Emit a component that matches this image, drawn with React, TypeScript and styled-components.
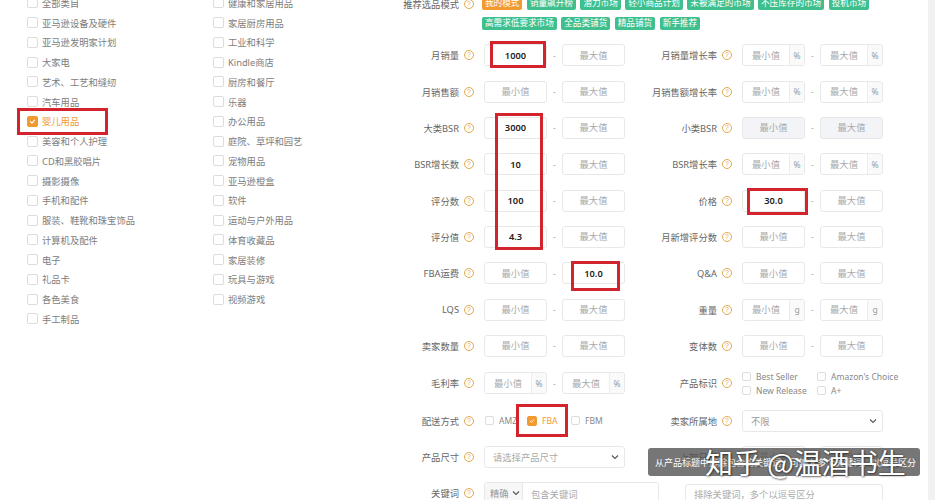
import React from "react";
import styled, { createGlobalStyle } from "styled-components";

const ORANGE = "#f29a30";
const GREEN = "#3fbf8d";
const RED = "#d3232c";

const GlobalStyle = createGlobalStyle`
  html, body {
    margin: 0;
    padding: 0;
    background: #fff;
    overflow: hidden;
  }
  body {
    font-family: "Noto Sans", "Noto Sans CJK SC", sans-serif;
  }
  * { box-sizing: border-box; }
`;

const leftCats = [
  "全部类目", "亚马逊设备及硬件", "亚马逊发明家计划", "大家电", "艺术、工艺和缝纫",
  "汽车用品", "婴儿用品", "美容和个人护理", "CD和黑胶唱片", "摄影摄像", "手机和配件",
  "服装、鞋靴和珠宝饰品", "计算机及配件", "电子", "礼品卡", "各色美食", "手工制品"
];
const midCats = [
  "健康和家居用品", "家居厨房用品", "工业和科学", "Kindle商店", "厨房和餐厅", "乐器",
  "办公用品", "庭院、草坪和园艺", "宠物用品", "亚马逊橙盒", "软件", "运动与户外用品",
  "体育收藏品", "家居装修", "玩具与游戏", "视频游戏"
];
const tags = [
  "我的模式", "销量飙升榜", "潜力市场", "轻小商品计划", "未被满足的市场", "不压库存的市场",
  "投机市场", "高需求低要求市场", "全品类铺货", "精品铺货", "新手推荐"
];

const Check: React.FC<{ checked?: boolean; size?: number }> = ({ checked, size = 10 }) => (
  <CheckBox $checked={checked} $size={size}>
    {checked && (
      <svg width={size - 4} height={size - 4} viewBox="0 0 10 10">
        <path d="M2 5.2 L4.2 7.2 L8 3" fill="none" stroke="#fff" strokeWidth="1.6" strokeLinecap="round" strokeLinejoin="round" />
      </svg>
    )}
  </CheckBox>
);

const Chevron = () => (
  <svg width="8" height="6" viewBox="0 0 8 6">
    <path d="M1 1.5 L4 4.5 L7 1.5" fill="none" stroke="#555" strokeWidth="1.1" />
  </svg>
);

const Label: React.FC<{ children: React.ReactNode; top?: boolean }> = ({ children, top }) => (
  <LabelCell $top={top}>
    {children}
    <Help>?</Help>
  </LabelCell>
);

const Box: React.FC<{ value?: string; ph: string; suffix?: string; disabled?: boolean }> = ({
  value,
  ph,
  suffix,
  disabled
}) => (
  <InputShell $disabled={disabled}>
    <Field placeholder={ph} value={value ?? ""} readOnly />
    {suffix && <Suffix>{suffix}</Suffix>}
  </InputShell>
);

const Range: React.FC<{ min?: string; max?: string; suffix?: string; disabled?: boolean }> = ({
  min,
  max,
  suffix,
  disabled
}) => (
  <RangeRow>
    <Box value={min} ph="最小值" suffix={suffix} disabled={disabled} />
    <Dash>-</Dash>
    <Box value={max} ph="最大值" suffix={suffix} disabled={disabled} />
  </RangeRow>
);

const App: React.FC = () => {
  return (
    <Page>
      <GlobalStyle />
      <CategoryPanel>
        <CategoryColumn>
          {leftCats.map((c) => (
            <CategoryRow key={c} $checked={c === "婴儿用品"}>
              <Check size={11} checked={c === "婴儿用品"} />
              {c}
            </CategoryRow>
          ))}
        </CategoryColumn>
        <CategoryColumn>
          {midCats.map((c) => (
            <CategoryRow key={c}>
              <Check size={11} />
              {c}
            </CategoryRow>
          ))}
        </CategoryColumn>
      </CategoryPanel>

      <FormGrid>
        <Label top>推荐选品模式</Label>
        <TagList>
          {tags.map((t, i) => (
            <Tag key={t} $active={i === 0}>{t}</Tag>
          ))}
        </TagList>

        <Label>月销量</Label>
        <Range min="1000" />
        <Label>月销量增长率</Label>
        <Range suffix="%" />

        <Label>月销售额</Label>
        <Range />
        <Label>月销售额增长率</Label>
        <Range suffix="%" />

        <Label>大类BSR</Label>
        <Range min="3000" />
        <Label>小类BSR</Label>
        <Range disabled />

        <Label>BSR增长数</Label>
        <Range min="10" />
        <Label>BSR增长率</Label>
        <Range suffix="%" />

        <Label>评分数</Label>
        <Range min="100" />
        <Label>价格</Label>
        <Range min="30.0" />

        <Label>评分值</Label>
        <Range min="4.3" />
        <Label>月新增评分数</Label>
        <Range />

        <Label>FBA运费</Label>
        <Range max="10.0" />
        <Label>Q&amp;A</Label>
        <Range />

        <Label>LQS</Label>
        <Range />
        <Label>重量</Label>
        <Range suffix="g" />

        <Label>卖家数量</Label>
        <Range />
        <Label>变体数</Label>
        <Range />

        <Label>毛利率</Label>
        <Range suffix="%" />
        <Label>产品标识</Label>
        <MarkGrid>
          <Option><Check size={9} />Best Seller</Option>
          <Option><Check size={9} />Amazon's Choice</Option>
          <Option><Check size={9} />New Release</Option>
          <Option><Check size={9} />A+</Option>
        </MarkGrid>

        <Label>配送方式</Label>
        <ShipRow>
          <Option $w={42}><Check size={9} />AMZ</Option>
          <Option $w={44} $checked><Check size={10} checked />FBA</Option>
          <Option><Check size={9} />FBM</Option>
        </ShipRow>
        <Label>卖家所属地</Label>
        <Select $w={141}>
          <span>不限</span>
          <Chevron />
        </Select>

        <Label>产品尺寸</Label>
        <Select $w={141} $muted>
          <span>请选择产品尺寸</span>
          <Chevron />
        </Select>
        <Label>上架日期</Label>
        <Range />

        <Label>关键词</Label>
        <KeywordGroup>
          <Mode>精确 <Chevron /></Mode>
          <KeywordInput placeholder="包含关键词" readOnly />
        </KeywordGroup>
        <ExcludeWrap>
          <Tooltip>从产品标题中排除包含的关键词，可输入多个关键词，以逗号区分</Tooltip>
          <KeywordInput $bordered placeholder="排除关键词，多个以逗号区分" readOnly />
        </ExcludeWrap>
      </FormGrid>

      <ScrollStrip />

      <Mark $x={17} $y={108} $w={91} $h={27} />
      <Mark $x={490} $y={41} $w={56} $h={27} />
      <Mark $x={495} $y={113} $w={48} $h={137} />
      <Mark $x={747} $y={188} $w={61} $h={27} />
      <Mark $x={571} $y={261} $w={49} $h={30} />
      <Mark $x={516} $y={404} $w={52} $h={33} />

      <Watermark>知乎 @温酒书生</Watermark>
    </Page>
  );
};

export default App;

const Page = styled.div`
  position: relative;
  width: 935px;
  height: 500px;
  overflow: hidden;
  display: flex;
  align-items: flex-start;
`;

const CategoryPanel = styled.div`
  width: 400px;
  flex-shrink: 0;
  margin-top: -7px;
  padding-left: 27px;
  display: flex;
`;

const CategoryColumn = styled.div`
  width: 186px;
  display: flex;
  flex-direction: column;
`;

const CategoryRow = styled.div<{ $checked?: boolean }>`
  height: 19.75px;
  display: flex;
  align-items: center;
  gap: 4px;
  font-size: 9.3px;
  color: ${(p) => (p.$checked ? ORANGE : "#7d7d7d")};
  white-space: nowrap;
`;

const CheckBox = styled.span<{ $checked?: boolean; $size: number }>`
  width: ${(p) => p.$size}px;
  height: ${(p) => p.$size}px;
  flex-shrink: 0;
  border-radius: 2px;
  border: 1px solid ${(p) => (p.$checked ? ORANGE : "#dcdcdc")};
  background: ${(p) => (p.$checked ? ORANGE : "#fff")};
  display: inline-flex;
  align-items: center;
  justify-content: center;
`;

const FormGrid = styled.div`
  width: 528px;
  flex-shrink: 0;
  margin-top: -3px;
  display: grid;
  grid-template-columns: 74px 176px 62px 186px;
  grid-template-rows: 33px repeat(9, 22px) 24px 22px 22px 22px;
  column-gap: 10px;
  row-gap: 14.33px;
  align-items: center;
`;

const LabelCell = styled.div<{ $top?: boolean }>`
  display: flex;
  justify-content: flex-end;
  align-items: center;
  align-self: ${(p) => (p.$top ? "start" : "center")};
  height: ${(p) => (p.$top ? "13px" : "auto")};
  gap: 5px;
  font-size: 9.3px;
  color: #666;
  white-space: nowrap;
`;

const Help = styled.span`
  width: 10px;
  height: 10px;
  flex-shrink: 0;
  border-radius: 50%;
  border: 1px solid #e3a94a;
  color: #e3a94a;
  font-size: 7px;
  line-height: 8px;
  text-align: center;
  font-family: "Liberation Sans", sans-serif;
`;

const TagList = styled.div`
  grid-column: 2 / 5;
  align-self: start;
  margin-left: -2px;
  display: flex;
  flex-wrap: wrap;
  gap: 7px 4.5px;
`;

const Tag = styled.span<{ $active?: boolean }>`
  height: 13px;
  padding: 0 3px;
  line-height: 13px;
  font-size: 8.6px;
  color: #fff;
  border-radius: 2px;
  background: ${(p) => (p.$active ? ORANGE : GREEN)};
  white-space: nowrap;
`;

const RangeRow = styled.div`
  display: flex;
  align-items: center;
`;

const InputShell = styled.div<{ $disabled?: boolean }>`
  width: 63px;
  height: 22px;
  display: flex;
  border: 1px solid #e8e8e8;
  border-radius: 3px;
  background: ${(p) => (p.$disabled ? "#f3f4f7" : "#fff")};
  overflow: hidden;
`;

const Field = styled.input`
  flex: 1;
  min-width: 0;
  border: none;
  outline: none;
  background: transparent;
  padding: 0;
  text-align: center;
  font-family: "Noto Sans", "Noto Sans CJK SC", sans-serif;
  font-size: 9.3px;
  font-weight: 600;
  color: #222;
  &::placeholder {
    color: #aaa;
    font-weight: 400;
  }
`;

const Suffix = styled.span`
  width: 15px;
  flex-shrink: 0;
  border-left: 1px solid #ededed;
  background: #fafafa;
  color: #999;
  font-size: 8.5px;
  display: flex;
  align-items: center;
  justify-content: center;
`;

const Dash = styled.span`
  width: 15px;
  text-align: center;
  color: #aaa;
  font-size: 9px;
`;

const MarkGrid = styled.div`
  display: grid;
  grid-template-columns: 75px auto;
  row-gap: 3px;
`;

const Option = styled.div<{ $checked?: boolean; $w?: number }>`
  display: flex;
  align-items: center;
  gap: 5px;
  width: ${(p) => (p.$w ? `${p.$w}px` : "auto")};
  height: 11px;
  font-size: 8.5px;
  color: ${(p) => (p.$checked ? ORANGE : "#888")};
  white-space: nowrap;
`;

const ShipRow = styled.div`
  display: flex;
  align-items: center;
  padding-left: 1px;
`;

const Select = styled.div<{ $w: number; $muted?: boolean }>`
  width: ${(p) => p.$w}px;
  height: 22px;
  border: 1px solid #e8e8e8;
  border-radius: 3px;
  padding: 0 5px 0 8px;
  display: flex;
  align-items: center;
  justify-content: space-between;
  font-size: 9.3px;
  color: ${(p) => (p.$muted ? "#aaa" : "#999")};
`;

const KeywordGroup = styled.div`
  width: 175px;
  height: 22px;
  display: flex;
  border: 1px solid #e8e8e8;
  border-radius: 3px;
  overflow: hidden;
`;

const Mode = styled.div`
  width: 38px;
  flex-shrink: 0;
  display: flex;
  align-items: center;
  gap: 3px;
  padding-left: 5px;
  background: #f7f7f7;
  border-right: 1px solid #e8e8e8;
  font-size: 9.3px;
  color: #999;
`;

const KeywordInput = styled.input<{ $bordered?: boolean }>`
  flex: 1;
  width: 100%;
  height: 22px;
  min-width: 0;
  border: ${(p) => (p.$bordered ? "1px solid #e8e8e8" : "none")};
  border-radius: 3px;
  outline: none;
  padding: 0 8px;
  font-family: "Noto Sans", "Noto Sans CJK SC", sans-serif;
  font-size: 9.3px;
  &::placeholder {
    color: #aaa;
  }
`;

const ExcludeWrap = styled.div`
  grid-column: 3 / 5;
  position: relative;
  margin-left: 15px;
  width: 198px;
`;

const Tooltip = styled.div`
  position: absolute;
  bottom: calc(100% + 5px);
  left: 50%;
  transform: translateX(-50%);
  width: 272px;
  height: 28px;
  padding-left: 7px;
  display: flex;
  align-items: center;
  border-radius: 3px;
  background: rgba(80, 80, 80, 0.78);
  color: #fff;
  font-size: 9px;
  white-space: nowrap;
  overflow: hidden;
  z-index: 2;
  &::after {
    content: "";
    position: absolute;
    top: 100%;
    left: 50%;
    margin-left: -5px;
    border: 5px solid transparent;
    border-top-color: rgba(80, 80, 80, 0.78);
  }
`;

const ScrollStrip = styled.div`
  flex: 1;
  align-self: stretch;
  background: #f1f1f1;
`;

const Mark = styled.div<{ $x: number; $y: number; $w: number; $h: number }>`
  position: absolute;
  left: ${(p) => p.$x}px;
  top: ${(p) => p.$y}px;
  width: ${(p) => p.$w}px;
  height: ${(p) => p.$h}px;
  border: 3px solid ${RED};
  pointer-events: none;
`;

const Watermark = styled.div`
  position: absolute;
  left: 705px;
  top: 444px;
  z-index: 3;
  font-family: "Noto Sans CJK SC", sans-serif;
  font-size: 28px;
  line-height: 36px;
  color: #fff;
  white-space: nowrap;
  text-shadow: 0 0 2px rgba(0, 0, 0, 0.55), 1px 1px 2px rgba(0, 0, 0, 0.45);
  pointer-events: none;
`;
